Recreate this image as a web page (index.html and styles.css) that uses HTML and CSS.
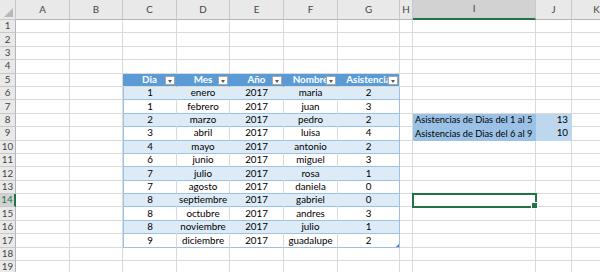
FILE: index.html
```html
<!DOCTYPE html>
<html lang="es">
<head>
    <meta charset="UTF-8">
    <title>Asistencias</title>
    <link rel="stylesheet" href="styles.css">
</head>
<body>
    <div class="sheet" id="sheet"></div>

    <script>
        const cols = ['', 'A', 'B', 'C', 'D', 'E', 'F', 'G', 'H', 'I', 'J', 'K'];
        const heads = ['Dia', 'Mes', 'Año', 'Nombre', 'Asistencia'];
        const datos = [
            [1, 'enero', 2017, 'maria', 2],
            [1, 'febrero', 2017, 'juan', 3],
            [2, 'marzo', 2017, 'pedro', 2],
            [3, 'abril', 2017, 'luisa', 4],
            [4, 'mayo', 2017, 'antonio', 2],
            [6, 'junio', 2017, 'miguel', 3],
            [7, 'julio', 2017, 'rosa', 1],
            [7, 'agosto', 2017, 'daniela', 0],
            [8, 'septiembre', 2017, 'gabriel', 0],
            [8, 'octubre', 2017, 'andres', 3],
            [8, 'noviembre', 2017, 'julio', 1],
            [9, 'diciembre', 2017, 'guadalupe', 2]
        ];
        const resumen = {
            8: ['Asistencias de Dias del 1 al 5', 13],
            9: ['Asistencias de Dias del 6 al 9', 10]
        };

        const sheet = document.getElementById('sheet');

        function cell(cls, text) {
            const div = document.createElement('div');
            div.className = 'cell ' + cls;
            if (text !== undefined) {
                const span = document.createElement('span');
                span.textContent = text;
                div.appendChild(span);
            }
            sheet.appendChild(div);
            return div;
        }

        // encabezado de columnas
        cols.forEach((c, i) => {
            let cls = i === 0 ? 'corner' : 'hd';
            if (c === 'I') cls += ' hd-sel';
            cell(cls, i === 0 ? undefined : c);
        });

        for (let r = 1; r <= 19; r++) {
            cell('rh' + (r === 14 ? ' rh-sel' : ''), r);
            for (let c = 1; c < cols.length; c++) {
                const t = c - 3; // indice dentro de la tabla (C..G)
                if (r === 5 && t >= 0 && t < 5) {
                    const th = cell('th' + (t === 4 ? ' t-last' : ''), heads[t]);
                    const btn = document.createElement('i');
                    btn.className = 'filter';
                    th.appendChild(btn);
                } else if (r >= 6 && r <= 17 && t >= 0 && t < 5) {
                    let cls = (r % 2 === 0 ? 'band' : 'plain');
                    if (t === 0) cls += ' t-first';
                    if (t === 4) cls += ' t-last';
                    if (r === 17 && t === 4) cls += ' t-end';
                    cell(cls, datos[r - 6][t]);
                } else if (resumen[r] && cols[c] === 'I') {
                    cell('lbl', resumen[r][0]);
                } else if (resumen[r] && cols[c] === 'J') {
                    cell('val', resumen[r][1]);
                } else if (r === 14 && cols[c] === 'I') {
                    cell('sel');
                } else {
                    cell('');
                }
            }
        }
    </script>
</body>
</html>
```

FILE: styles.css
```css
body {
    margin: 0;
    font-family: Lato, "Liberation Sans", sans-serif;
    font-size: 9.8px;
    background-color: #fff;
    overflow: hidden;
}
.sheet {
    display: grid;
    grid-template-columns: 16px 54px 53px 54px 53px 54px 54px 62px 13px 123px 36px 50px;
    grid-template-rows: 20px;
    grid-auto-rows: 13.4px;
}
.cell {
    box-sizing: border-box;
    position: relative;
    display: flex;
    align-items: center;
    justify-content: center;
    border-right: 1px solid #dadada;
    border-bottom: 1px solid #dadada;
    white-space: nowrap;
    overflow: hidden;
    color: #000;
    line-height: 1;
}

/* encabezados de hoja */
.corner, .hd, .rh {
    background-color: #e9e9e9;
    color: #444;
    border-right-color: #c8c8c8;
    border-bottom-color: #c8c8c8;
}
.hd { border-bottom-color: #b5b5b5; }
.rh { border-right-color: #b5b5b5; }
.corner::after {
    content: "";
    position: absolute;
    right: 2px;
    bottom: 2px;
    border-left: 9px solid transparent;
    border-bottom: 9px solid #b9b9b9;
}
.hd-sel {
    background-color: #d2d2d2;
    border-bottom: 2px solid #217346;
}
.rh-sel {
    background-color: #d2d2d2;
    color: #217346;
    border-right: 2px solid #217346;
}

/* tabla */
.th {
    background-color: #5b9bd5;
    border-right-color: #5b9bd5;
    color: #fff;
    font-weight: bold;
    overflow: visible;
}
.th.t-last { border-right-color: #dadada; }
.filter {
    position: absolute;
    right: 1px;
    top: 2px;
    width: 10px;
    height: 9px;
    box-sizing: border-box;
    background-color: #fff;
    border: 1px solid #a6a6a6;
}
.filter::after {
    content: "";
    position: absolute;
    left: 2px;
    top: 3px;
    border-left: 2.5px solid transparent;
    border-right: 2.5px solid transparent;
    border-top: 3px solid #595959;
}
.band {
    background-color: #ddebf7;
    border-right-color: #ddebf7;
    border-bottom-color: #9bc2e6;
}
.plain {
    border-bottom-color: #9bc2e6;
}
.t-first { border-left: 1px solid #9bc2e6; }
.band.t-last, .plain.t-last { border-right-color: #9bc2e6; }
.t-end::after {
    content: "";
    position: absolute;
    right: 0;
    bottom: 0;
    border-left: 3px solid transparent;
    border-bottom: 3px solid #4472c4;
}

/* resumen */
.lbl {
    justify-content: flex-start;
    padding-left: 2px;
    font-size: 9.3px;
    background-color: #9bc2e6;
    border-color: #9bc2e6;
}
.val {
    justify-content: flex-end;
    padding-right: 3px;
    background-color: #bdd7ee;
    border-color: #bdd7ee;
}
.sel {
    overflow: visible;
    z-index: 1;
    outline: 2px solid #217346;
    outline-offset: -1px;
}
.sel::after {
    content: "";
    position: absolute;
    right: -3px;
    bottom: -3px;
    width: 5px;
    height: 5px;
    background-color: #217346;
    border: 1px solid #fff;
}
```
